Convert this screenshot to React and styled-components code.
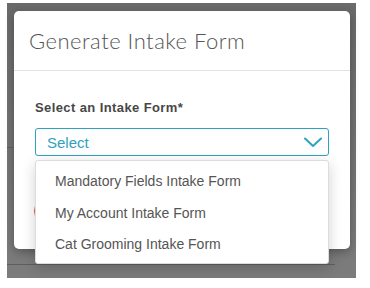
import React from 'react';
import styled, { createGlobalStyle } from 'styled-components';

const GlobalStyle = createGlobalStyle`
  html, body {
    margin: 0;
    padding: 0;
    background: #ffffff;
    font-family: "Liberation Sans", Arial, sans-serif;
  }
`;

const forms = ['Mandatory Fields Intake Form', 'My Account Intake Form', 'Cat Grooming Intake Form'];

const Page = styled.div`
  width: 370px;
  height: 288px;
  padding: 3px 0 0 7px;
  box-sizing: border-box;
`;

const Backdrop = styled.div`
  position: relative;
  width: 349px;
  height: 275px;
  background: linear-gradient(#6a6a6a, #7c7c7c);
  padding: 8px 0 0 7px;
  box-sizing: border-box;

  &::before {
    content: '';
    position: absolute;
    left: 0;
    top: 144px;
    width: 7px;
    height: 1px;
    background: #585858;
  }
`;

const UnderLine = styled.div`
  margin: 15px 0 0 -7px;
  width: 328px;
  height: 1px;
  background: #5e5e5e;
`;

const Modal = styled.div`
  width: 336px;
  height: 238px;
  background: #fff;
  border-radius: 5px;
  box-shadow: 0 3px 10px rgba(0, 0, 0, 0.3);
  display: flex;
  flex-direction: column;
`;

const Header = styled.div`
  height: 59px;
  border-bottom: 1px solid #e3e3e3;
  display: flex;
  align-items: center;
  padding: 0 15px;
`;

const Title = styled.h2`
  margin: 0;
  font-family: Lato, "Open Sans", sans-serif;
  font-weight: 300;
  font-size: 22px;
  color: #555;
  letter-spacing: 0.5px;
`;

const Body = styled.div`
  padding: 29px 21px 0;
  display: flex;
  flex-direction: column;
`;

const Label = styled.label`
  font-size: 13px;
  font-weight: bold;
  color: #474747;
  line-height: 15px;
  letter-spacing: 0.4px;
  margin-bottom: 13px;
`;

const SelectWrap = styled.div`
  position: relative;
  width: 294px;
`;

const SelectBox = styled.div`
  height: 28px;
  box-sizing: border-box;
  border: 1px solid #2fa3bd;
  border-radius: 3px;
  display: flex;
  align-items: center;
  justify-content: space-between;
  padding: 0 6px 0 11px;
  font-size: 15px;
  color: #2fa3bd;
`;

const Menu = styled.ul`
  position: absolute;
  top: 32px;
  left: 0;
  right: 0;
  margin: 0;
  padding: 5px 0 2px;
  list-style: none;
  background: #fff;
  border: 1px solid #dcdcdc;
  border-radius: 3px;
  box-shadow: 0 4px 14px rgba(0, 0, 0, 0.18);
  z-index: 2;
`;

const MenuItem = styled.li`
  height: 31.5px;
  line-height: 31.5px;
  padding-left: 19px;
  font-size: 14px;
  color: #555;
`;

const Footer = styled.div`
  margin-top: 43px;
  padding: 0 20px;
  display: flex;
`;

const CancelButton = styled.div`
  height: 24px;
  width: 80px;
  box-sizing: border-box;
  border: 1px solid #e8572a;
  border-radius: 12px;
  background: #fff;
`;

const Chevron = () => (
  <svg width="18" height="11" viewBox="0 0 18 11" fill="none">
    <path d="M1 1.5 L9 9 L17 1.5" stroke="#2fa3bd" strokeWidth="2" strokeLinecap="round" strokeLinejoin="round" />
  </svg>
);

export default function App() {
  return (
    <Page>
      <GlobalStyle />
      <Backdrop>
        <Modal>
          <Header>
            <Title>Generate Intake Form</Title>
          </Header>
          <Body>
            <Label>Select an Intake Form*</Label>
            <SelectWrap>
              <SelectBox>
                <span>Select</span>
                <Chevron />
              </SelectBox>
              <Menu>
                {forms.map((f) => (
                  <MenuItem key={f}>{f}</MenuItem>
                ))}
              </Menu>
            </SelectWrap>
          </Body>
          <Footer>
            <CancelButton />
          </Footer>
        </Modal>
        <UnderLine />
      </Backdrop>
    </Page>
  );
}
